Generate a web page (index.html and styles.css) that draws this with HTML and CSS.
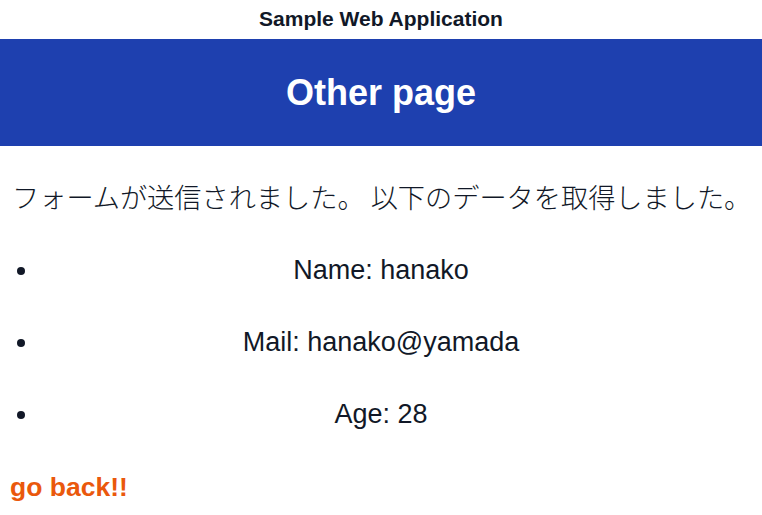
FILE: index.html
```html
<!DOCTYPE html>
<html lang="ja">
<head>
<meta charset="utf-8">
<title>Other page</title>
<link rel="stylesheet" href="styles.css">
</head>
<body>
<header class="site-title">Sample Web Application</header>
<div class="banner"><h1 class="banner-title">Other page</h1></div>
<main class="content">
  <p class="message">フォームが送信されました。 以下のデータを取得しました。</p>
  <ul class="data-list">
    <li class="data-item">Name: hanako</li>
    <li class="data-item">Mail: hanako@yamada</li>
    <li class="data-item">Age: 28</li>
  </ul>
  <a class="back-link" href="#">go back!!</a>
</main>
</body>
</html>
```
FILE: styles.css
```css
html, body {
  margin: 0;
  padding: 0;
  background: #ffffff;
  color: #111827;
  font-family: "Liberation Sans", Arial, "Noto Sans CJK JP", sans-serif;
}
.site-title {
  text-align: center;
  font-weight: bold;
  font-size: 21px;
  line-height: 37px;
  height: 39px;
}
.banner {
  background: #1e40af;
  height: 107px;
  display: flex;
  align-items: center;
  justify-content: center;
}
.banner-title {
  margin: 0;
  color: #ffffff;
  font-size: 36px;
  font-weight: bold;
}
.message {
  margin: 32px 0 0 12px;
  font-size: 27.2px;
  line-height: 36px;
  font-family: "Noto Sans CJK JP", sans-serif;
  font-weight: 300;
  white-space: nowrap;
}
.data-list {
  margin: 38px 40px 0 40px;
  padding: 0;
}
.data-item {
  text-align: center;
  font-size: 27px;
  line-height: 36px;
  margin-bottom: 36px;
}
.back-link {
  display: block;
  margin: 40px 0 0 10px;
  color: #ea580c;
  font-weight: bold;
  font-size: 26.5px;
  text-decoration: none;
}
```
